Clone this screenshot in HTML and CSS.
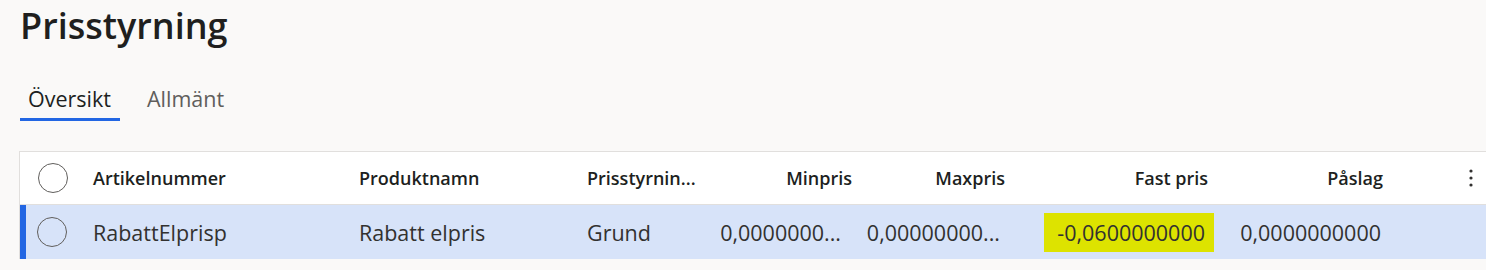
FILE: index.html
```html
<!DOCTYPE html>
<html lang="sv">
  <head>
    <meta charset="UTF-8" />
    <title>Prisstyrning</title>
    <link rel="stylesheet" href="styles.css">
  </head>
  <body>
    <h1 class="title">Prisstyrning</h1>

    <div class="tabs">
      <div class="tab active">Översikt</div>
      <div class="tab">Allmänt</div>
    </div>

    <div class="grid">
      <div class="row header">
        <div class="cell check"><span class="circle"></span></div>
        <div class="cell c-art">Artikelnummer</div>
        <div class="cell c-prod">Produktnamn</div>
        <div class="cell c-type">Prisstyrnin...</div>
        <div class="cell c-min num">Minpris</div>
        <div class="cell c-max num">Maxpris</div>
        <div class="cell c-fast num">Fast pris</div>
        <div class="cell c-pa num">Påslag</div>
        <div class="cell c-more">
          <svg width="4" height="20" viewBox="0 0 4 20">
            <circle cx="2" cy="3" r="1.6" fill="#323130" />
            <circle cx="2" cy="10" r="1.6" fill="#323130" />
            <circle cx="2" cy="17" r="1.6" fill="#323130" />
          </svg>
        </div>
      </div>

      <div class="row selected">
        <div class="cell check"><span class="circle"></span></div>
        <div class="cell c-art">RabattElprisp</div>
        <div class="cell c-prod">Rabatt elpris</div>
        <div class="cell c-type">Grund</div>
        <div class="cell c-min num">0,0000000...</div>
        <div class="cell c-max num">0,00000000...</div>
        <div class="cell c-fast num"><span class="mark">-0,0600000000</span></div>
        <div class="cell c-pa num">0,0000000000</div>
        <div class="cell c-more"></div>
      </div>
    </div>
  </body>
</html>
```

FILE: styles.css
```css
body {
  margin: 0;
  background: #faf9f8;
  font-family: "Open Sans", "Noto Sans", sans-serif;
  color: #201f1e;
}

.title {
  margin: 0;
  padding: 2px 0 0 20px;
  font-size: 36px;
  font-weight: 600;
  line-height: 48px;
}

.tabs {
  display: flex;
  gap: 19px;
  margin: 30px 0 0 20px;
}

.tab {
  padding: 0 9px 0 8px;
  font-size: 21.5px;
  line-height: 38px;
  color: #605e5c;
  border-bottom: 3px solid transparent;
}

.tab.active {
  color: #201f1e;
  border-bottom-color: #2266e3;
}

.grid {
  margin: 30px 0 0 19px;
  background: #fff;
  border-top: 1px solid #e1dfdd;
  border-left: 1px solid #e1dfdd;
}

.row {
  display: flex;
  align-items: center;
  height: 52px;
  border-bottom: 1px solid #e1dfdd;
  font-size: 21.5px;
  color: #323130;
}

.row.header {
  font-weight: 600;
  font-size: 18px;
  color: #201f1e;
}

.row.selected {
  height: 54px;
  background: #d7e3f9;
  border-bottom: none;
  border-left: 6px solid #2266e3;
}

.cell {
  white-space: nowrap;
}

.check {
  width: 66px;
  padding-left: 18px;
  box-sizing: border-box;
  display: flex;
}

.selected .check {
  width: 60px;
  padding-left: 11px;
}

.circle {
  width: 28px;
  height: 28px;
  border: 1px solid #605e5c;
  border-radius: 50%;
}

.num {
  text-align: right;
  box-sizing: border-box;
}

.c-art { width: 266px; padding-left: 7px; }
.c-prod { width: 228px; }
.c-type { width: 120px; }
.c-min { width: 145px; }
.c-max { width: 153px; }
.c-fast { width: 203px; }
.c-pa { width: 175px; }

.selected .c-min { padding-right: 11px; }
.selected .c-max { padding-right: 5px; }
.selected .c-pa { padding-right: 2px; }

.c-more {
  flex: 1;
  display: flex;
  justify-content: flex-end;
  padding-right: 13px;
}

.mark {
  background: #dde300;
  padding: 5px 9px 5px 13px;
  margin-right: -6px;
}
```
